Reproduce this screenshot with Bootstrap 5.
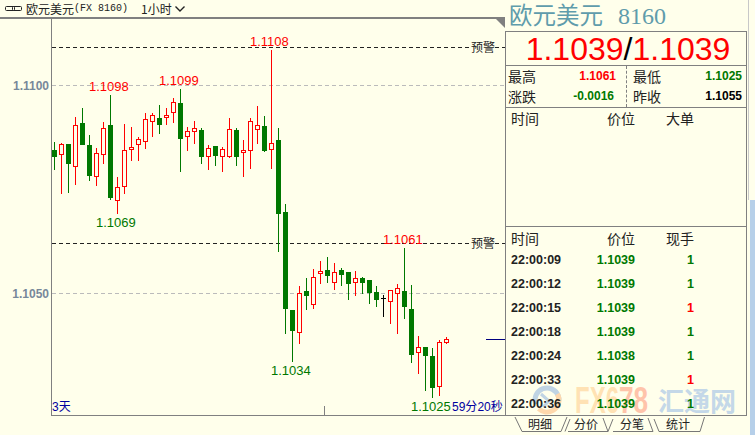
<!DOCTYPE html>
<html lang="zh">

<head>
   <meta charset="UTF-8">
   <title>欧元美元 8160</title>
   <link href="https://cdn.jsdelivr.net/npm/bootstrap@5.3.0/dist/css/bootstrap.min.css" rel="stylesheet">
   <style>
      html, body {
         height: 100%;
         overflow: hidden;
      }

      body {
         background-color: #ffffeb;
         color: #222;
         font-family: "Noto Sans CJK SC", sans-serif;
         font-size: 14px;
         line-height: 1;
      }

      .app-shell {
         width: 755px;
         height: 435px;
      }

      .chart-col {
         width: 505px;
      }

      .chart-head {
         height: 19px;
         padding-left: 5px;
         border-bottom: 2px solid #808080;
         font-size: 12px;
      }

      .chart-code {
         font-family: "Liberation Mono", monospace;
         font-size: 10px;
      }

      .chart-period {
         margin-left: 13px;
      }

      .chart-caret {
         margin-left: 3px;
      }

      .chart-svg {
         display: block;
         width: 506px;
         height: 416px;
      }

      .chart-svg text {
         font-family: "Liberation Sans", sans-serif;
         font-size: 13px;
      }

      .chart-svg .axis-label {
         font-size: 12px;
         font-weight: 700;
         fill: #77889a;
      }

      .chart-svg .alarm-label {
         font-family: "Noto Sans CJK SC", sans-serif;
         font-size: 12px;
         fill: #222;
      }

      .chart-svg .count-label {
         font-size: 12px;
         fill: #0000a0;
      }

      .chart-svg .count-label tspan {
         font-family: "Noto Sans CJK SC", sans-serif;
      }

      .side-col {
         width: 242px;
      }

      .side-title {
         height: 31px;
         padding: 3px 0 0 4px;
         color: #5f9cab;
         font-size: 23.5px;
      }

      .side-title-code {
         font-family: "Liberation Serif", serif;
         font-size: 24px;
         margin-left: 15px;
      }

      .side-box {
         position: relative;
         height: 385px;
         border: 1px solid #808080;
      }

      .quote-line {
         height: 34px;
         padding-left: 4px;
         color: #f00;
         font-family: "Liberation Sans", sans-serif;
         font-size: 32px;
         border-bottom: 1px solid #808080;
      }

      .quote-line span {
         color: #000;
      }

      .stat-block {
         height: 42px;
         border-bottom: 1px solid #808080;
      }

      .stat-half {
         width: 120px;
         padding: 0 1px 0 2px;
      }

      .stat-half + .stat-half {
         width: 120px;
         padding: 0 4px 0 6px;
         border-left: 1px dashed #808080;
      }

      .stat-row {
         height: 20px;
      }

      .stat-val {
         font-family: "Liberation Sans", sans-serif;
         font-size: 12px;
         font-weight: 700;
      }

      .stat-half .stat-val {
         margin-right: 9px;
      }

      .stat-half .stat-val.stat-wide {
         margin-right: 11px;
      }

      .stat-half + .stat-half .stat-val {
         margin-right: 0;
      }

      .c-red {
         color: #f00;
      }

      .c-green {
         color: #007800;
      }

      .c-black {
         color: #000;
      }

      .tick-grid {
         display: grid;
         grid-template-columns: 85px 39px 59px;
         padding-left: 5px;
         align-items: center;
         position: relative;
      }

      .tick-head {
         height: 14px;
      }

      .tick-pane {
         height: 119px;
         padding-top: 3px;
         border-bottom: 1px solid #808080;
      }

      .tick-list {
         padding-top: 4px;
      }

      .tick-list .tick-head {
         margin-bottom: 3px;
      }

      .tick-row {
         height: 24px;
         font-family: "Liberation Sans", sans-serif;
         font-size: 12.5px;
         font-weight: 700;
      }

      .tick-row > div:first-child {
         color: #222;
      }

      .cell-end {
         text-align: right;
      }

      .mark-layer {
         position: absolute;
         left: 0;
         top: 343px;
      }

      .mark-fx {
         font-family: "Liberation Sans", sans-serif;
         font-size: 36px;
         font-weight: 700;
      }

      .mark-cn {
         font-family: "Noto Sans CJK SC", sans-serif;
         font-size: 26px;
         font-weight: 700;
         fill: #c4d8e8;
      }

      .tab-strip {
         position: relative;
         height: 19px;
      }

      .tab-strip svg {
         position: absolute;
         left: 0;
         top: 0;
      }

      .tab-row {
         position: relative;
         padding-left: 12px;
      }

      .tab-item {
         width: 46px;
         height: 15px;
         font-size: 12px;
         text-align: center;
         line-height: 15px;
      }

      .edge-col {
         width: 8px;
      }

      .edge-top {
         height: 200px;
         margin-left: 1px;
         border-left: 1px solid #c8c8c8;
      }

      .edge-fill {
         width: 5px;
         margin-left: 3px;
         background-color: #b6cfe9;
      }
   </style>
</head>

<body>

   <div class="app-shell d-flex">
      <div class="chart-col flex-shrink-0">
         <div class="chart-head d-flex align-items-center">
            <svg width="17" height="7" viewBox="0 0 17 7" class="me-1" fill="none" stroke="#222">
               <rect x="0.5" y="1.5" width="9" height="4" rx="1"></rect>
               <rect x="7.5" y="1.5" width="9" height="4" rx="1"></rect>
            </svg>
            <span>欧元美元</span><span class="chart-code">(FX 8160)</span>
            <span class="chart-period">1小时</span>
            <svg width="10" height="6" viewBox="0 0 10 6" class="chart-caret" fill="none" stroke="#222" stroke-width="1.4">
               <path d="M0.5 0.5 L5 5 L9.5 0.5"></path>
            </svg>
         </div>
         <svg id="chart" class="chart-svg" viewBox="0 19 506 416"></svg>
      </div>

      <div class="side-col flex-shrink-0 d-flex flex-column">
         <div class="side-title">欧元美元<span class="side-title-code">8160</span></div>
         <div class="side-box flex-shrink-0">
            <div class="quote-line d-flex justify-content-center align-items-center">1.1039<span>/</span>1.1039</div>
            <div class="stat-block d-flex">
               <div class="stat-half">
                  <div class="stat-row d-flex justify-content-between align-items-center">最高<span class="stat-val c-red">1.1061</span></div>
                  <div class="stat-row d-flex justify-content-between align-items-center">涨跌<span class="stat-val stat-wide c-green">-0.0016</span></div>
               </div>
               <div class="stat-half">
                  <div class="stat-row d-flex justify-content-between align-items-center">最低<span class="stat-val c-green">1.1025</span></div>
                  <div class="stat-row d-flex justify-content-between align-items-center">昨收<span class="stat-val c-black">1.1055</span></div>
               </div>
            </div>
            <div class="tick-pane">
               <div class="tick-grid tick-head">
                  <div>时间</div>
                  <div class="cell-end">价位</div>
                  <div class="cell-end">大单</div>
               </div>
            </div>
            <svg class="mark-layer" width="240" height="41" viewBox="506 374 240 41">
               <circle cx="547" cy="399" r="12" fill="none" stroke="#c0d4e4" stroke-width="5" stroke-dasharray="42 34" transform="rotate(160 547 399)"></circle>
               <circle cx="547" cy="399" r="12" fill="none" stroke="#ffd8ac" stroke-width="5" stroke-dasharray="34 42" transform="rotate(-30 547 399)"></circle>
               <path d="M541 393 L549 400 L543 406" fill="none" stroke="#c0d4e4" stroke-width="3"></path>
               <text class="mark-fx" x="575" y="412" fill="#ffe2b4" textLength="44" lengthAdjust="spacingAndGlyphs">FX6</text>
               <text class="mark-fx" x="619" y="412" fill="#ffc4aa" textLength="29" lengthAdjust="spacingAndGlyphs">78</text>
               <text class="mark-cn" x="658" y="410">汇通网</text>
            </svg>
            <div class="tick-list">
               <div class="tick-grid tick-head">
                  <div>时间</div>
                  <div class="cell-end">价位</div>
                  <div class="cell-end">现手</div>
               </div>
               <div id="tick-rows"></div>
            </div>
         </div>
         <div class="tab-strip">
            <svg width="242" height="19" viewBox="505 415 242 19" fill="none" stroke="#777">
               <path d="M515 416 L522 430.5 L561 430.5 L567 416"></path>
               <path d="M565 430.5 L570 418 M568 430.5 L608 430.5 L603 417"></path>
               <path d="M608 430.5 L613 418 M613 430.5 L653 430.5 L648 417"></path>
               <path d="M659 430.5 L654 418 M659 430.5 L700 430.5 L704.5 416"></path>
            </svg>
            <div class="tab-row d-flex">
               <div class="tab-item">明细</div>
               <div class="tab-item">分价</div>
               <div class="tab-item">分笔</div>
               <div class="tab-item">统计</div>
            </div>
         </div>
      </div>

      <div class="edge-col flex-shrink-0 d-flex flex-column">
         <div class="edge-top"></div>
         <div class="edge-fill flex-grow-1"></div>
      </div>
   </div>

   <script src="https://cdn.jsdelivr.net/npm/bootstrap@5.3.0/dist/js/bootstrap.bundle.min.js"></script>
   <script>
      // type, wick top, wick bottom, body top, body bottom
      const candles = [
         ['g', 142, 170, 150, 157], ['r', 143, 194, 144, 155], ['g', 144, 193, 144, 164], ['r', 117, 185, 125, 167],
         ['g', 108, 145, 123, 145], ['g', 135, 181, 145, 176], ['r', 148, 186, 153, 177], ['r', 122, 164, 128, 155],
         ['g', 95, 200, 125, 198], ['r', 177, 214, 187, 201], ['r', 124, 194, 150, 187], ['r', 127, 161, 147, 150],
         ['r', 137, 161, 139, 145], ['r', 113, 149, 119, 142], ['r', 113, 137, 115, 122], ['g', 105, 134, 118, 125],
         ['r', 108, 125, 115, 118], ['r', 98, 123, 102, 113], ['g', 89, 172, 103, 139], ['r', 127, 151, 131, 137],
         ['r', 121, 144, 128, 132], ['g', 128, 164, 130, 157], ['r', 145, 170, 148, 157], ['g', 146, 166, 146, 156],
         ['r', 147, 172, 149, 157], ['r', 118, 158, 129, 157], ['g', 128, 166, 130, 157], ['r', 140, 177, 150, 153],
         ['r', 118, 169, 121, 151], ['r', 106, 144, 125, 130], ['g', 116, 152, 126, 151], ['r', 50, 169, 143, 150],
         ['g', 128, 252, 140, 214], ['g', 204, 334, 212, 309], ['g', 310, 362, 310, 331], ['r', 286, 344, 293, 333],
         ['g', 278, 310, 291, 296], ['r', 269, 309, 277, 305], ['r', 261, 284, 271, 274], ['g', 257, 283, 270, 276],
         ['r', 263, 290, 272, 283], ['g', 268, 286, 270, 275], ['g', 272, 300, 272, 284], ['r', 271, 296, 278, 283],
         ['g', 277, 294, 278, 283], ['g', 280, 304, 280, 293], ['g', 286, 307, 292, 300], ['k', 295, 317, 298, 299],
         ['r', 290, 324, 290, 302], ['r', 284, 334, 288, 294], ['g', 248, 319, 291, 307], ['g', 285, 363, 309, 355],
         ['r', 336, 374, 347, 353], ['g', 347, 391, 347, 356], ['g', 348, 398, 356, 388], ['r', 340, 396, 342, 387],
         ['r', 337, 344, 339, 343]
      ];

      const priceLabels = [
         ['1.1108', 250, 46, '#f00'], ['1.1098', 89, 91, '#f00'], ['1.1099', 159, 85, '#f00'], ['1.1061', 383, 244, '#f00'],
         ['1.1069', 96, 227, '#007800'], ['1.1034', 271, 375, '#007800'], ['1.1025', 411, 411, '#007800']
      ];

      const ticks = [
         ['22:00:09', '1.1039', 'g'], ['22:00:12', '1.1039', 'g'], ['22:00:15', '1.1039', 'r'], ['22:00:18', '1.1039', 'g'],
         ['22:00:24', '1.1038', 'g'], ['22:00:33', '1.1039', 'r'], ['22:00:36', '1.1039', 'g']
      ];

      const colors = { g: '#007800', r: '#f00', k: '#000' };
      const bg = '#ffffeb';
      let out = '';

      function box(x, y, w, h, fill) {
         out += `<rect x="${x}" y="${y}" width="${w}" height="${h}" fill="${fill}"></rect>`;
      }

      function hline(y, x1, x2, stroke, dash) {
         out += `<line x1="${x1}" y1="${y}" x2="${x2}" y2="${y}" stroke="${stroke}" stroke-dasharray="${dash}"></line>`;
      }

      hline(85.5, 52, 505, '#bbb', '4 3');
      hline(293.5, 52, 505, '#bbb', '4 3');
      hline(47.5, 52, 470, '#222', '4 3');
      hline(47.5, 495, 505, '#222', '4 3');
      hline(243.5, 52, 470, '#222', '4 3');
      hline(243.5, 495, 505, '#222', '4 3');

      box(51, 19, 1, 397, '#808080');
      box(51, 415, 455, 1, '#808080');
      box(324, 406, 1, 9, '#808080');
      box(486, 339, 19, 1, '#000080');
      out += '<polygon points="496,19 505,19 505,28" fill="#808080"></polygon>';

      candles.forEach((c, i) => {
         const x = 54 + i * 7;
         box(x, c[1], 1, c[2] - c[1], colors[c[0]]);
         if (c[0] === 'r') {
            box(x - 2, c[3], 5, c[4] - c[3], colors.r);
            box(x - 1, c[3] + 1, 3, c[4] - c[3] - 2, bg);
         } else {
            box(x - 2, c[3], 5, c[4] - c[3], colors[c[0]]);
         }
      });

      priceLabels.forEach(l => {
         out += `<text x="${l[1]}" y="${l[2]}" fill="${l[3]}">${l[0]}</text>`;
      });

      out += '<text class="axis-label" x="49" y="90" text-anchor="end">1.1100</text>';
      out += '<text class="axis-label" x="49" y="298" text-anchor="end">1.1050</text>';
      out += '<text class="alarm-label" x="471" y="52">预警</text>';
      out += '<text class="alarm-label" x="471" y="248">预警</text>';
      out += '<text class="count-label" x="52" y="411">3<tspan>天</tspan></text>';
      out += '<text class="count-label" x="452" y="411">59<tspan>分</tspan>20<tspan>秒</tspan></text>';

      document.getElementById('chart').innerHTML = out;

      const rows = document.getElementById('tick-rows');
      ticks.forEach(t => {
         const row = document.createElement('div');
         row.className = 'tick-grid tick-row';
         row.innerHTML = `<div>${t[0]}</div><div class="cell-end c-green">${t[1]}</div><div class="cell-end ${t[2] === 'r' ? 'c-red' : 'c-green'}">1</div>`;
         rows.appendChild(row);
      });
   </script>

</body>

</html>
